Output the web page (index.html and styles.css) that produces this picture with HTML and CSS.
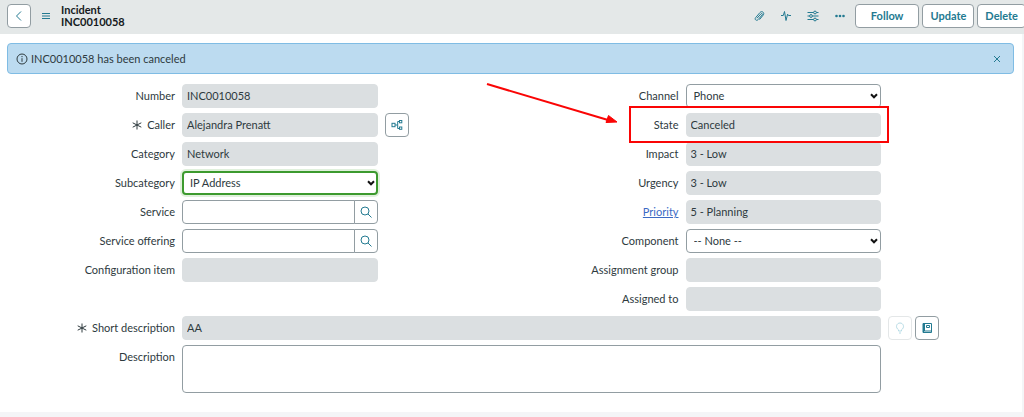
FILE: index.html
```
<!DOCTYPE html>
<html lang="en">
<head>
<meta charset="UTF-8">
<meta name="viewport" content="width=device-width, initial-scale=1">
<title>INC0010058 | Incident</title>
<link rel="stylesheet" href="styles.css">
</head>

<body>

<header class="navbar">
  <button class="btn btn-icon" type="button" aria-label="Back">
    <svg width="14" height="14" viewBox="0 0 14 14"><path d="M9 2.500 4.500 7 9 11.500"/></svg>
  </button>
  <button class="btn-plain menu" type="button" aria-label="Additional actions">
    <svg width="10" height="10" viewBox="0 0 10 10"><path d="M1 2.500h8M1 5h8M1 7.500h8"/></svg>
  </button>
  <h1 class="title">Incident<br>INC0010058</h1>
  <div class="tools">
    <button class="btn-plain" type="button" aria-label="Attachments">
      <svg width="12" height="12" viewBox="0 0 12 12"><path d="M4 8.200 8 3.800c.8-.9 2 .2 1.200 1.100L5 9.700c-1.500 1.600-3.800-.3-2.400-2L7 2.500c1.900-2.200 5 .3 3.200 2.600L6.500 9.600"/></svg>
    </button>
    <button class="btn-plain" type="button" aria-label="Activity">
      <svg width="12" height="12" viewBox="0 0 12 12"><path d="M1 5.500h2.300L4.500 1.500 6 10.500 7.600 4.200 8.500 5.500H11"/></svg>
    </button>
    <button class="btn-plain" type="button" aria-label="Personalize form">
      <svg width="12" height="12" viewBox="0 0 12 12"><path d="M.5 2.500h6M9.500 2.500h2M.5 6h2M5.500 6h6M.5 9.500h6M9.500 9.500h2"/><circle cx="8" cy="2.500" r="1.400"/><circle cx="4" cy="6" r="1.400"/><circle cx="8" cy="9.500" r="1.400"/></svg>
    </button>
    <button class="btn-plain dots" type="button" aria-label="More options">
      <svg width="12" height="12" viewBox="0 0 12 12"><circle cx="2.500" cy="6" r="1.300"/><circle cx="6" cy="6" r="1.300"/><circle cx="9.500" cy="6" r="1.300"/></svg>
    </button>
  </div>
  <div class="actions">
    <button class="btn btn-wide" type="button">Follow</button>
    <button class="btn" type="button">Update</button>
    <button class="btn" type="button">Delete</button>
  </div>
</header>

<main class="content">

  <div class="message" role="status">
    <svg width="12" height="12" viewBox="0 0 12 12"><circle cx="6" cy="6" r="5"/><path d="M6 5.200v3.600M6 3v1.200"/></svg>
    <span>INC0010058 has been canceled</span>
    <button class="btn-plain close" type="button" aria-label="Close">
      <svg width="10" height="10" viewBox="0 0 10 10"><path d="M2 2l6 6M8 2 2 8"/></svg>
    </button>
  </div>

  <form class="form">
    <div class="columns">
      <div class="column">
        <div class="row">
          <label for="number">Number</label>
          <input class="field" id="number" type="text" value="INC0010058" readonly>
        </div>
        <div class="row">
          <label for="caller"><svg class="required" width="10" height="10" viewBox="0 0 10 10"><path d="M5 .5v9M.7 2.800l8.600 4.400M9.300 2.800.7 7.200"/></svg>Caller</label>
          <input class="field" id="caller" type="text" value="Alejandra Prenatt" readonly>
          <div class="addons">
            <button class="btn btn-icon" type="button" aria-label="Show related incidents">
              <svg width="12" height="12" viewBox="0 0 12 12"><rect x="1" y="4.300" width="3" height="3.400"/><path d="M4 6h2.500M8.500 2.500H6.700v7h1.800"/><rect x="8.500" y="1.500" width="2.300" height="2.300"/><rect x="8.500" y="8" width="2.300" height="2.300"/></svg>
            </button>
          </div>
        </div>
        <div class="row">
          <label for="category">Category</label>
          <input class="field" id="category" type="text" value="Network" readonly>
        </div>
        <div class="row">
          <label for="subcategory">Subcategory</label>
          <div class="select">
            <select class="field changed" id="subcategory"><option>IP Address</option></select>
            <svg width="8" height="6" viewBox="0 0 8 6"><path d="M1 1.300l3 3 3-3"/></svg>
          </div>
        </div>
        <div class="row">
          <label for="service">Service</label>
          <div class="lookup">
            <input class="field" id="service" type="text">
            <button class="btn" type="button" aria-label="Look up service">
              <svg width="12" height="12" viewBox="0 0 12 12"><circle cx="5" cy="5" r="4"/><path d="M8 8l3.500 3.500"/></svg>
            </button>
          </div>
        </div>
        <div class="row">
          <label for="offering">Service offering</label>
          <div class="lookup">
            <input class="field" id="offering" type="text">
            <button class="btn" type="button" aria-label="Look up service offering">
              <svg width="12" height="12" viewBox="0 0 12 12"><circle cx="5" cy="5" r="4"/><path d="M8 8l3.500 3.500"/></svg>
            </button>
          </div>
        </div>
        <div class="row">
          <label for="item">Configuration item</label>
          <input class="field" id="item" type="text" readonly>
        </div>
      </div>

      <div class="column">
        <div class="row">
          <label for="channel">Channel</label>
          <div class="select">
            <select class="field" id="channel"><option>Phone</option></select>
            <svg width="8" height="6" viewBox="0 0 8 6"><path d="M1 1.300l3 3 3-3"/></svg>
          </div>
        </div>
        <div class="row marked">
          <label for="state">State</label>
          <input class="field" id="state" type="text" value="Canceled" readonly>
          <div class="marker"></div>
          <svg class="arrow" width="134" height="44" viewBox="0 0 134 44"><path class="shaft" d="M2 3l121 36"/><path class="head" d="M132 41l-11 .5 2.500-7z"/></svg>
        </div>
        <div class="row">
          <label for="impact">Impact</label>
          <input class="field" id="impact" type="text" value="3 - Low" readonly>
        </div>
        <div class="row">
          <label for="urgency">Urgency</label>
          <input class="field" id="urgency" type="text" value="3 - Low" readonly>
        </div>
        <div class="row">
          <label for="priority"><a href="#priority">Priority</a></label>
          <input class="field" id="priority" type="text" value="5 - Planning" readonly>
        </div>
        <div class="row">
          <label for="component">Component</label>
          <div class="select">
            <select class="field" id="component"><option>-- None --</option></select>
            <svg width="8" height="6" viewBox="0 0 8 6"><path d="M1 1.300l3 3 3-3"/></svg>
          </div>
        </div>
        <div class="row">
          <label for="group">Assignment group</label>
          <input class="field" id="group" type="text" readonly>
        </div>
        <div class="row">
          <label for="assigned">Assigned to</label>
          <input class="field" id="assigned" type="text" readonly>
        </div>
      </div>
    </div>

    <div class="row">
      <label for="short"><svg class="required" width="10" height="10" viewBox="0 0 10 10"><path d="M5 .5v9M.7 2.800l8.600 4.400M9.300 2.800.7 7.200"/></svg>Short description</label>
      <input class="field" id="short" type="text" value="AA" readonly>
      <div class="addons">
        <button class="btn btn-icon" type="button" aria-label="Suggestion" disabled>
          <svg width="12" height="12" viewBox="0 0 12 12"><path d="M4.500 9V7.800C1 5.500 2.500 1 6 1s5 4.500 1.500 6.800V9zM5 11h2"/></svg>
        </button>
        <button class="btn btn-icon" type="button" aria-label="Search knowledge">
          <svg width="12" height="12" viewBox="0 0 12 12"><path d="M2 1.500h8.500v9H2zM2.500 1v9.500M3.500 1v8M2 9h8.500M5.500 3.500h3v2h-3z"/></svg>
        </button>
      </div>
    </div>
    <div class="row">
      <label for="description">Description</label>
      <textarea class="field" id="description"></textarea>
    </div>
  </form>

</main>

</body>
</html>
```

FILE: styles.css
```
* {
  box-sizing: border-box;
}
body {
  margin: 0;
  background-color: #f4f5f7;
  color: #2e3a3e;
  font-family: Lato, "Liberation Sans", sans-serif;
  font-size: 11px;
  line-height: 14px;
}
svg {
  display: block;
  flex: none;
  fill: none;
  stroke: currentColor;
}
button, input, select, textarea {
  margin: 0;
  color: inherit;
  font: inherit;
}

/* header */
.navbar {
  display: flex;
  align-items: center;
  height: 34px;
  padding: 0 0 2px 7px;
  background-color: #e4e8e8;
  overflow: hidden;
}
.title {
  margin: 0 auto 0 7px;
  color: #151a1c;
  font-size: 11px;
  font-weight: 700;
  line-height: 12px;
}
.tools {
  display: flex;
  gap: 11px;
  margin-right: 7px;
}
.actions {
  display: flex;
  flex: none;
  gap: 3px;
  margin-right: -2px;
}
.btn {
  display: flex;
  align-items: center;
  justify-content: center;
  height: 24px;
  padding: 0 7px;
  background-color: #fff;
  border: 1px solid #929da2;
  border-radius: 4px;
  color: #237a91;
  font-weight: 700;
}
.btn-wide {
  padding: 0 15px;
}
.btn-icon {
  width: 24px;
  padding: 0;
}
.btn:disabled {
  border-color: #e4e7e8;
  color: #b5dbe5;
}
.btn-plain {
  display: flex;
  align-items: center;
  justify-content: center;
  width: 16px;
  height: 16px;
  padding: 0;
  background: none;
  border: 0;
  color: #237a91;
}
.menu {
  margin-left: 7px;
}
.dots svg {
  fill: currentColor;
  stroke: none;
}

/* form */
.content {
  margin-right: 2px;
  padding: 9px 8px 19px 7px;
  background-color: #fff;
}
.message {
  display: flex;
  align-items: center;
  gap: 3px;
  height: 31px;
  padding: 0 8px;
  background-color: #bcdbf0;
  border: 1px solid #7fbce4;
  border-radius: 4px;
}
.close {
  margin-left: auto;
}
.form {
  display: grid;
  gap: 5px;
  margin-top: 10px;
}
.columns {
  display: grid;
  grid-template-columns: 1fr 1fr;
}
.column {
  display: grid;
  align-content: start;
  gap: 5px;
}
.row {
  display: grid;
  grid-template-columns: 168px 1fr 126px;
  gap: 7px;
}
label {
  display: flex;
  align-items: center;
  justify-content: flex-end;
  height: 24px;
}
label a {
  color: #3b6ac4;
}
.required {
  margin-right: 5px;
}
.field {
  width: 100%;
  min-width: 0;
  height: 24px;
  padding: 0 4px;
  background-color: #fff;
  border: 1px solid #929da2;
  border-radius: 4px;
  outline: 0;
}
input.field {
  padding-bottom: 2px;
}
.field:read-only:not(select) {
  background-color: #dbdfe1;
  border-color: #dbdfe1;
}
textarea.field {
  display: block;
  height: 48px;
  resize: none;
}
.select {
  position: relative;
}
.select select {
  appearance: none;
  padding: 0 16px 0 7px;
}
.select svg {
  position: absolute;
  top: 9px;
  right: 3px;
  color: #111;
  stroke-width: 2;
  pointer-events: none;
}
.select .changed {
  border: 2px solid #3c9a2e;
  padding-left: 6px;
  box-shadow: 0 0 0 2px #e0f0dc;
}
.lookup {
  display: flex;
}
.lookup .field {
  flex: 1;
  border-radius: 4px 0 0 4px;
}
.lookup .btn {
  width: 24px;
  margin-left: -1px;
  padding: 0;
  border-radius: 0 4px 4px 0;
}
.addons {
  display: flex;
  gap: 3px;
}

/* highlight of the state field */
.marked {
  position: relative;
}
.marker {
  position: absolute;
  top: -7px;
  right: 125px;
  bottom: -6px;
  left: 118px;
  border: 2px solid #fa0505;
}
.arrow {
  position: absolute;
  top: -32px;
  left: -26px;
  color: #fa0505;
}
.shaft {
  stroke-width: 2;
}
.head {
  fill: currentColor;
}
```
